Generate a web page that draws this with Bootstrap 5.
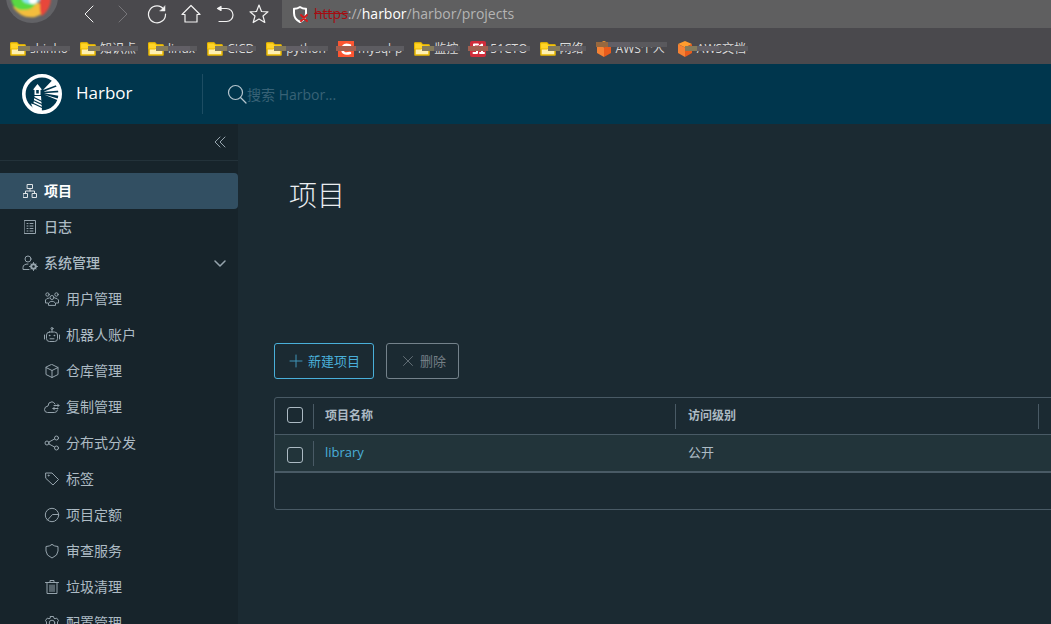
<!DOCTYPE html>
<html lang="zh-CN">
<head>
<meta charset="utf-8">
<meta name="viewport" content="width=device-width, initial-scale=1">
<title>Harbor</title>
<link href="https://cdn.jsdelivr.net/npm/bootstrap@5.3.0/dist/css/bootstrap.min.css" rel="stylesheet">
<style>
:root{--line:#495a65;--soft:#adbbc4}
body{font-family:"Open Sans","Noto Sans CJK SC",sans-serif;background:#1b2a32;color:var(--soft);font-size:14px;line-height:20px}
svg{display:block;flex:none;fill:none;stroke:currentColor;stroke-linecap:round;stroke-linejoin:round}
svg.solid{stroke:none}
button{font:inherit}
.app{height:100vh;overflow:hidden}
/* browser chrome */
.chrome{background:#4a494d}
.toolbar{height:28px;padding-left:6px}
.orb{width:52px;height:28px;overflow:hidden}
.tool{width:20px;margin-right:14px;color:#f2f2f2;background:none;border:0;padding:0;display:flex;justify-content:center}
.tool:disabled{color:#77767a}
.tools{padding-left:21px}
.address{background:#5f5f60;color:#b4b4b4;padding:0 0 0 10px;gap:5px;margin-left:-1px}
.address b{font-weight:400;color:#fff}
.address s{color:#a40d12}
.marks{height:36px;padding:5px 0 0 10px;gap:12px}
.bm{position:relative;display:flex;align-items:center;gap:4px;font-size:12px;line-height:16px;color:#dcdcdc;text-decoration:none;white-space:nowrap}
.bm::after{content:"";position:absolute;left:8px;right:-2px;top:5px;height:5px;background:linear-gradient(90deg,#847b5c 0 12px,#625f66 12px 34px,#5a595d 34px)}
.bm.warm::after{left:-2px;background:linear-gradient(90deg,#a15f50 0 20px,#5d5c61 20px)}
.bm.high::after{left:0;top:1px;background:linear-gradient(90deg,#97683f 0 12px,#625f66 12px 34px,#5a595d 34px)}
/* header */
.top{background:#00364d;height:60px;flex:none}
.brand{width:203px;height:40px;border-right:1px solid #1d4d63;padding-left:22px;color:#fff;font-size:17px;gap:14px;text-decoration:none}
.brand span{line-height:20px;padding-bottom:2px}
.search{padding-left:24px;color:#b5c6cf}
.search input{background:none;border:0;outline:0;padding:2px 0 0;color:#fff;font-size:14px;width:200px}
.search input::placeholder{color:#386276;opacity:1}
/* sidebar */
.side{width:238px;flex:none;background:#17242b}
.side svg{opacity:.85}
.fold{height:37px;border-bottom:1px solid #23323a;padding-right:11px;margin-bottom:12px}
.plain{background:none;border:0;padding:0;color:var(--soft)}
.item{display:flex;align-items:center;height:36px;padding:0 11px 0 22px;gap:6px;color:var(--soft);text-decoration:none;font-weight:500}
.item.on{background:#324f62;color:#fff;font-weight:700;border-radius:0 4px 4px 0}
.item.sub{padding-left:44px;font-weight:400}
/* content */
.main{min-width:0;padding-left:36px;overflow:hidden}
h1{font-size:28px;line-height:36px;font-weight:300;color:#eaedf0;margin:53px 0 130px 15px}
.acts{gap:12px}
.act{display:flex;align-items:center;height:36px;padding:0 13px 0 14px;gap:5px;font-size:13px;border:1px solid #49afd9;border-radius:3px;background:none;color:#49afd9}
.act svg{opacity:.8}
.act:disabled{border-color:#74828b;color:#747f86;padding-right:12px}
.grid{border:1px solid var(--line);border-radius:3px;min-width:1130px;margin-top:18px}
.grid table{border-collapse:separate;border-spacing:0;table-layout:fixed;width:100%;font-size:13px}
.col-check{width:39px}
.col-name{width:362px}
.col-access{width:363px}
.grid th,.grid td{height:36px;padding:0 0 0 12px;vertical-align:middle}
.grid th:nth-child(2),.grid td:nth-child(2){padding-left:11px}
.grid th{font-size:12px;font-weight:700;height:37px;border-bottom:1px solid var(--line)}
.sep{position:relative}
.sep::after{content:"";position:absolute;right:0;top:6px;height:25px;border-right:1px solid var(--line)}
.grid td{background:#22343a;padding-bottom:2px}
.grid td a{color:#49afd9;text-decoration:none}
.grid input{appearance:none;display:block;width:16px;height:16px;margin:0;border:1px solid #acbac3;border-radius:3px}
.grid th input{margin-bottom:2px}
.grid td input{margin-top:5px}
.foot{height:38px;border-top:2px solid var(--line)}
</style>
</head>
<body>
<svg width="0" height="0" class="position-absolute">
<symbol id="folder" viewBox="0 0 16 14"><path d="M1 1h6l1.500 2H15v10H1z" fill="#fff0b0" stroke="#e9b800" stroke-width="1.500"/><path d="M1 1h6l1.500 2H15v2.500H9L7.500 7H1z" fill="#ffd428" stroke="#e9b800"/></symbol>
<symbol id="aws" viewBox="0 0 16 16"><path d="M8 0l7 3-7 3.500L1 3z" fill="#ff9d2e" stroke="none"/><path d="M1 3l7 3.500V16l-7-4z" fill="#f58234" stroke="none"/><path d="M15 3L8 6.500V16l7-4z" fill="#e85b1c" stroke="none"/></symbol>
</svg>
<div class="app d-flex flex-column">
<div class="chrome">
  <div class="toolbar d-flex">
    <div class="orb"><svg class="solid" width="52" height="28" viewBox="0 0 52 28"><defs><filter id="soft" x="-20%" y="-20%" width="140%" height="140%"><feGaussianBlur stdDeviation="1"/></filter></defs><circle cx="26" cy="-3" r="26" fill="#626266"/><g filter="url(#soft)"><path d="M6-4q0 12 8 17l14-8z" fill="#45c94a"/><path d="M7 7q8 12 22 10 10-3 12-10L28 1z" fill="#f3bd3c"/><path d="M34-6h11q1 14-9 22-3-1-2-22z" fill="#e8473a"/><path d="M5-3q1 13 12 13 12 0 14-10z" fill="#58d943"/><ellipse cx="25" cy="-1" rx="9" ry="5" fill="#8de6f0"/><circle cx="27" cy="0" r="4" fill="#fff"/></g></svg></div>
    <div class="tools d-flex">
      <button class="tool align-items-center" aria-label="后退"><svg width="12" height="18" viewBox="0 0 12 18"><path d="M10 1L2 9l8 8"/></svg></button>
      <button class="tool align-items-center" aria-label="前进" disabled><svg width="12" height="18" viewBox="0 0 12 18"><path d="M2 1l8 8-8 8"/></svg></button>
      <button class="tool align-items-center" aria-label="刷新"><svg width="20" height="20" viewBox="0 0 20 20" stroke-width="1.200"><path d="M17 5.500A8.500 8.500 0 1 0 18.500 10"/><path d="M18 2v5h-5z" fill="currentColor" stroke-width=".5"/></svg></button>
      <button class="tool align-items-center" aria-label="主页"><svg width="20" height="20" viewBox="0 0 20 20" stroke-width="1.200"><path d="M1 10.500L10 1.500l9 9h-3V18H4v-7.500z"/></svg></button>
      <button class="tool align-items-center" aria-label="撤销"><svg width="20" height="20" viewBox="0 0 20 20" stroke-width="1.200"><path d="M4 4.500h7.500a6.500 6.500 0 0 1 0 13H4"/><path d="M2.500 4.500L6 2.500v4z" fill="currentColor"/></svg></button>
      <button class="tool align-items-center" aria-label="收藏"><svg width="20" height="20" viewBox="0 0 20 20" stroke-width="1.200"><path d="M10 1l2.500 6.500 6.500.3-5 4.200 1.800 6.500L10 15l-5.800 3.500L6 12 1 7.800l6.500-.3z"/></svg></button>
    </div>
    <div class="address d-flex align-items-center flex-grow-1"><svg width="17" height="18" viewBox="0 0 17 18"><path d="M8 2q3 2 6 1.800V8q0 6-6 9-6-3-6-9V3.800Q5 4 8 2z" stroke="#fff" stroke-width="2"/><path d="M9 10l6 6m0-6l-6 6" stroke="#d31c1c" stroke-width="2"/></svg><span><s>https</s>://<b>harbor</b>/harbor/projects</span></div>
  </div>
  <nav class="marks d-flex align-items-center">
    <a class="bm" href="#"><svg width="16" height="14"><use href="#folder"/></svg>shinho</a>
    <a class="bm" href="#"><svg width="16" height="14"><use href="#folder"/></svg>知识点</a>
    <a class="bm" href="#"><svg width="16" height="14"><use href="#folder"/></svg>linux</a>
    <a class="bm" href="#"><svg width="16" height="14"><use href="#folder"/></svg>CICD</a>
    <a class="bm" href="#"><svg width="16" height="14"><use href="#folder"/></svg>python</a>
    <a class="bm warm" href="#"><svg width="16" height="16" viewBox="0 0 16 16"><path d="M0 0h16v16H0z" fill="#fc5531" stroke="none"/><path d="M12 4.500Q5 2 4.500 8T12 12" stroke="#fff" stroke-width="2.500"/></svg>mysql-p</a>
    <a class="bm" href="#"><svg width="16" height="14"><use href="#folder"/></svg>监控</a>
    <a class="bm warm" href="#"><svg width="16" height="16" viewBox="0 0 16 16"><rect width="16" height="16" rx="2" fill="#d02c3a" stroke="none"/><path d="M8 3.500H4V7h3v5H3.500M10 5l2-1.500V12m-2 0h4" stroke="#fff" stroke-width="2"/></svg>51CTO</a>
    <a class="bm" href="#"><svg width="16" height="14"><use href="#folder"/></svg>网络</a>
    <a class="bm high" href="#"><svg width="16" height="16"><use href="#aws"/></svg>AWS个人</a>
    <a class="bm" href="#"><svg width="16" height="16"><use href="#aws"/></svg>AWS文档</a>
  </nav>
</div>
<header class="top d-flex align-items-center">
  <a class="brand d-flex align-items-center" href="#"><svg class="solid" width="40" height="40" viewBox="0 0 40 40"><path d="M9 29.500l3.500 1L18 34l4 5-10-2z" fill="#fff"/><circle cx="20" cy="20" r="18.200" stroke="#fff" stroke-width="3.600"/><path d="M11.500 15l4-5 4 5v1h-1v5h-6v-5h-1zM12.500 22h6.500l1 14-9-3z" fill="#fff"/><path d="M14.200 16h2.600v3.500h-2.600z" fill="#00364d"/><path d="M12 23.500l8 4M11.500 26.500l8.500 4M11.500 29.500l8.500 4" stroke="#00364d" stroke-width="1.200"/><path d="M21 16L31 5.500l5 5zM21.500 17.800L36 12l2 4.500zM22 19.200l16-1V22zM22 20.500l15.500 4.500-1 1.500z" fill="#fff"/></svg><span>Harbor</span></a>
  <label class="search d-flex align-items-center"><svg width="20" height="20" viewBox="0 0 20 20" stroke-width="1.200"><circle cx="8.500" cy="8.500" r="7"/><path d="M13.500 13.500L19 19"/></svg><input type="text" placeholder="搜索 Harbor..." aria-label="搜索 Harbor"></label>
</header>
<div class="d-flex flex-grow-1 overflow-hidden">
  <nav class="side">
    <div class="fold d-flex justify-content-end align-items-center"><button class="plain" aria-label="收起"><svg width="14" height="14" viewBox="0 0 14 14"><path d="M7 2L2 7l5 5M12 2L7 7l5 5"/></svg></button></div>
    <a class="item on" href="#"><svg width="16" height="16" viewBox="0 0 16 16"><path d="M5.500 1.500h5v4h-5zM1.500 10.500h4v4h-4zM10.500 10.500h4v4h-4zM8 5.500V8M3.500 10.500V8h9v2.500"/></svg>项目</a>
    <a class="item" href="#"><svg width="16" height="16" viewBox="0 0 16 16"><path d="M2.500 1.500h11v13h-11zM5 4.500h1M8 4.500h3M5 7h1M8 7h3M5 9.500h1M8 9.500h3M5 12h1M8 12h3"/></svg>日志</a>
    <a class="item" href="#"><svg width="16" height="16" viewBox="0 0 16 16"><circle cx="6" cy="4" r="3"/><path d="M7 14.500H1v-2Q1 9 6 9"/><circle cx="11.500" cy="11.500" r="2.300" stroke-width="2"/><path d="M11.500 7.500v1M11.500 14.500v1M7.500 11.500h1M14.500 11.500h1M9 9l.5.500M13.500 13.500l.5.500M14 9l-.5.500M9.500 13.500l-.5.500"/></svg><span class="flex-grow-1">系统管理</span><svg width="14" height="14" viewBox="0 0 14 14" stroke-width="1.500"><path d="M2 5l5 5 5-5"/></svg></a>
    <a class="item sub" href="#"><svg width="16" height="16" viewBox="0 0 16 16"><circle cx="8" cy="6.500" r="2"/><circle cx="3.500" cy="3.500" r="1.700"/><circle cx="12.500" cy="3.500" r="1.700"/><path d="M4.500 14v-2Q8 8.500 11.500 12v2zM3.500 12H1.500V9q1-2 3.500-2M12.500 12h2V9q-1-2-3.500-2"/></svg>用户管理</a>
    <a class="item sub" href="#"><svg width="16" height="16" viewBox="0 0 16 16"><rect x="2.500" y="5" width="11" height="9.500" rx="3"/><path d="M8 5V2.500M.5 8v4M15.500 8v4M6 11.800h4"/><circle cx="8" cy="1.500" r="1"/><path d="M5.500 8.500h.3M10.300 8.500h.3" stroke-width="1.500"/></svg>机器人账户</a>
    <a class="item sub" href="#"><svg width="16" height="16" viewBox="0 0 16 16"><path d="M8 1.500l6 3v7l-6 3-6-3v-7zM2 4.500l6 3 6-3M8 7.500v7"/></svg>仓库管理</a>
    <a class="item sub" href="#"><svg width="16" height="16" viewBox="0 0 16 16"><path d="M13.500 11q-.5 2.500-3 2.500h-7q-3 0-3-3T4 7q0-4 4-4.200Q10 3 11 5M10 6.500h5M13.500 5L15 6.500 13.500 8M14 9.500H9M10.500 8L9 9.500l1.500 1.500"/></svg>复制管理</a>
    <a class="item sub" href="#"><svg width="16" height="16" viewBox="0 0 16 16"><circle cx="3" cy="8" r="2"/><circle cx="12.500" cy="3" r="2"/><circle cx="12.500" cy="13" r="2"/><path d="M5 7l5.500-3M5 9l5.500 3"/></svg>分布式分发</a>
    <a class="item sub" href="#"><svg width="16" height="16" viewBox="0 0 16 16"><path d="M2 2h6l6.500 6.500-5.500 5.500L2 7.500z"/><circle cx="4.500" cy="4.500" r=".5"/></svg>标签</a>
    <a class="item sub" href="#"><svg width="16" height="16" viewBox="0 0 16 16"><circle cx="8" cy="8" r="6.700"/><path d="M3.500 13L8.500 7.500h6"/></svg>项目定额</a>
    <a class="item sub" href="#"><svg width="16" height="16" viewBox="0 0 16 16"><path d="M8 1.500q2.500 2 6 2V8q0 4.500-6 7-6-2.500-6-7V3.500q3.500 0 6-2z"/></svg>审查服务</a>
    <a class="item sub" href="#"><svg width="16" height="16" viewBox="0 0 16 16"><path d="M1.500 3.500h13M3 3.500v11h10v-11M6 3.500v-2h4v2M6 6v6.500M8 6v6.500M10 6v6.500"/></svg>垃圾清理</a>
    <a class="item sub" href="#"><svg width="16" height="16" viewBox="0 0 16 16"><circle cx="8" cy="8" r="2.800"/><path d="M6.500 1.500h3l.5 1.800 1 .5 1.700-.7 1.800 2.400-1 1.500v2l1 1.500-1.800 2.400-1.700-.7-1 .5-.5 1.800h-3L6 12.700l-1-.5-1.700.7-1.800-2.400 1-1.500V7l-1-1.500 1.800-2.400 1.700.7 1-.5z"/></svg>配置管理</a>
  </nav>
  <main class="main flex-grow-1">
    <h1>项目</h1>
    <div class="acts d-flex">
      <button class="act"><svg width="14" height="14" viewBox="0 0 14 14"><path d="M7 1v12M1 7h12"/></svg>新建项目</button>
      <button class="act" disabled><svg width="14" height="14" viewBox="0 0 14 14"><path d="M2.500 2.500l9 9M11.500 2.500l-9 9"/></svg>删除</button>
    </div>
    <div class="grid">
      <table>
        <colgroup><col class="col-check"><col class="col-name"><col class="col-access"><col></colgroup>
        <thead><tr><th class="sep"><input type="checkbox" aria-label="全选"></th><th class="sep">项目名称</th><th class="sep">访问级别</th><th></th></tr></thead>
        <tbody><tr><td class="sep"><input type="checkbox" aria-label="选择 library"></td><td><a href="#">library</a></td><td>公开</td><td></td></tr></tbody>
      </table>
      <div class="foot"></div>
    </div>
  </main>
</div>
</div>
<script src="https://cdn.jsdelivr.net/npm/bootstrap@5.3.0/dist/js/bootstrap.bundle.min.js"></script>
</body>
</html>
